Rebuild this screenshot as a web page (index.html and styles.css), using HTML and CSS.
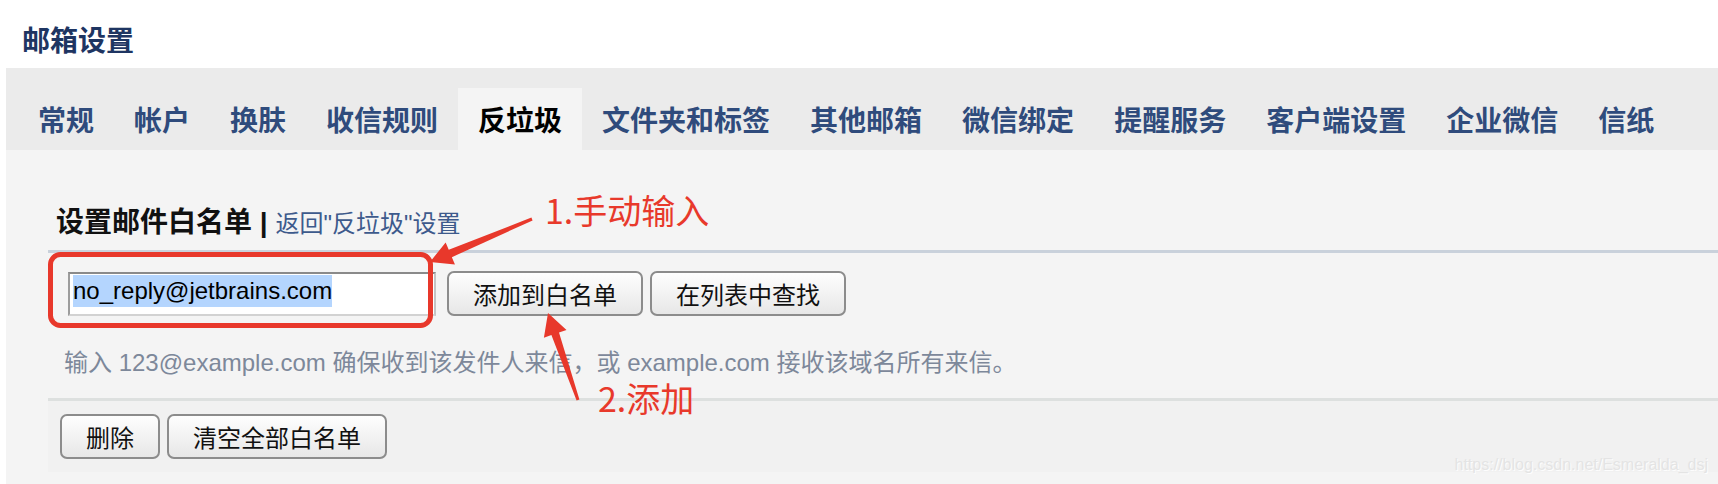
FILE: index.html
```html
<!DOCTYPE html>
<html lang="zh-CN">
<head>
<meta charset="utf-8">
<title>邮箱设置</title>
<link rel="stylesheet" href="styles.css">
</head>
<body>
<div class="page">
  <h1 class="page-title">邮箱设置</h1>
  <nav class="tabs">
    <a class="tab">常规</a>
    <a class="tab">帐户</a>
    <a class="tab">换肤</a>
    <a class="tab">收信规则</a>
    <a class="tab active">反垃圾</a>
    <a class="tab">文件夹和标签</a>
    <a class="tab">其他邮箱</a>
    <a class="tab">微信绑定</a>
    <a class="tab">提醒服务</a>
    <a class="tab">客户端设置</a>
    <a class="tab">企业微信</a>
    <a class="tab">信纸</a>
  </nav>
  <main class="panel">
    <div class="section-head">
      <span class="section-title">设置邮件白名单</span>
      <span class="sep">|</span>
      <a class="back-link">返回"反垃圾"设置</a>
    </div>
    <div class="add-row">
      <div class="fake-input"><span class="sel">no_reply@jetbrains.com</span></div>
      <button class="btn">添加到白名单</button>
      <button class="btn">在列表中查找</button>
    </div>
    <p class="hint">输入 123@example.com 确保收到该发件人来信，或 example.com 接收该域名所有来信。</p>
    <div class="footer-bar">
      <button class="btn">删除</button>
      <button class="btn">清空全部白名单</button>
    </div>
  </main>

  <svg class="annotations" width="1718" height="484" viewBox="0 0 1718 484">
    <rect x="50.5" y="254.5" width="380" height="71" rx="10" ry="10" fill="none" stroke="#e8382b" stroke-width="5"/>
    <polygon fill="#e8382b" points="430,262 454.96,264.55 451.85,257.18 532.58,220.38 531.42,217.62 448.75,249.82 445.64,242.45"/>
    <polygon fill="#e8382b" points="548,313 566.5,329.9 559.0,332.5 579.4,399.5 576.6,400.5 551.4,335.1 543.9,337.7"/>
  </svg>
  <div class="note note-1">1.手动输入</div>
  <div class="note note-2">2.添加</div>
  <div class="watermark">https://blog.csdn.net/Esmeralda_dsj</div>
</div>
</body>
</html>
```
FILE: styles.css
```css
body {
  margin: 0;
  background: #fff;
}

.page {
  position: relative;
  height: 484px;
  overflow: hidden;
  font-family: "Liberation Sans", "Noto Sans CJK SC", sans-serif;
}

.page-title {
  margin: 0;
  height: 68px;
  box-sizing: border-box;
  padding: 19px 0 0 22px;
  font-family: "Noto Sans CJK SC", "Liberation Sans", sans-serif;
  font-size: 28px;
  font-weight: 700;
  line-height: 40px;
  color: #1e3562;
}

.tabs {
  display: flex;
  margin-left: 6px;
  height: 82px;
  box-sizing: border-box;
  padding: 20px 0 0 12px;
  background: #ebebeb;
}

.tab {
  display: block;
  padding: 0 20px;
  height: 62px;
  line-height: 62px;
  font-family: "Noto Sans CJK SC", "Liberation Sans", sans-serif;
  font-size: 28px;
  font-weight: 700;
  color: #2f4b7c;
  white-space: nowrap;
}

.tab.active {
  background: #f4f4f4;
  color: #000;
}

.panel {
  display: block;
  margin-left: 6px;
  height: 334px;
  box-sizing: border-box;
  padding: 50px 0 0 42px;
  background: #f4f4f4;
}

.section-head {
  height: 40px;
  line-height: 40px;
  padding-left: 8px;
  margin-bottom: 10px;
  font-size: 28px;
  white-space: nowrap;
}

.section-title {
  font-family: "Noto Sans CJK SC", "Liberation Sans", sans-serif;
  font-size: 28px;
  font-weight: 700;
  color: #111;
}

.sep {
  font-size: 28px;
  font-weight: 700;
  color: #111;
}

.back-link {
  font-size: 24px;
  color: #3d5a8c;
}

.add-row {
  display: flex;
  align-items: flex-start;
  gap: 7px;
  border-top: 3px solid #c9d1db;
  padding: 18px 0 0 20px;
}

.fake-input {
  width: 368px;
  height: 44px;
  box-sizing: border-box;
  margin-top: 1px;
  margin-right: 4px;
  padding: 1px 0 0 3px;
  background: #fff;
  border: 2px solid;
  border-color: #8a8a8a #c4c4c4 #d2d2d2 #9c9c9c;
}

.sel {
  display: inline-block;
  height: 32px;
  line-height: 32px;
  font-family: "Liberation Sans", sans-serif;
  font-size: 24px;
  color: #000;
  background: #b4d5fe;
}

.btn {
  height: 45px;
  box-sizing: border-box;
  padding: 0 24px;
  border: 2px solid #8c8c8c;
  border-radius: 7px;
  background: linear-gradient(#fefefe, #e7e7e7);
  font-family: "Noto Sans CJK SC", "Liberation Sans", sans-serif;
  font-size: 24px;
  line-height: 39px;
  color: #111;
}

.hint {
  margin: 29px 0 17px;
  padding-left: 16px;
  height: 36px;
  line-height: 36px;
  font-size: 24px;
  color: #7d889a;
  white-space: nowrap;
}

.footer-bar {
  display: flex;
  gap: 7px;
  height: 74px;
  box-sizing: border-box;
  padding: 13px 0 0 12px;
  border-top: 3px solid #dde0df;
  background: #f1f1f1;
}

.annotations {
  position: absolute;
  left: 0;
  top: 0;
  pointer-events: none;
}

.note {
  position: absolute;
  font-family: "Noto Sans CJK SC", "Liberation Sans", sans-serif;
  font-size: 34px;
  line-height: 34px;
  color: #e8392b;
  white-space: nowrap;
}

.note-1 {
  left: 545px;
  top: 193px;
}

.note-2 {
  left: 598px;
  top: 381px;
}

.watermark {
  position: absolute;
  right: 10px;
  top: 455px;
  font-family: "Liberation Sans", sans-serif;
  font-size: 16px;
  line-height: 20px;
  color: #e4e4e4;
  text-shadow: 1px 1px 0 rgba(255, 255, 255, 0.9);
}
```
